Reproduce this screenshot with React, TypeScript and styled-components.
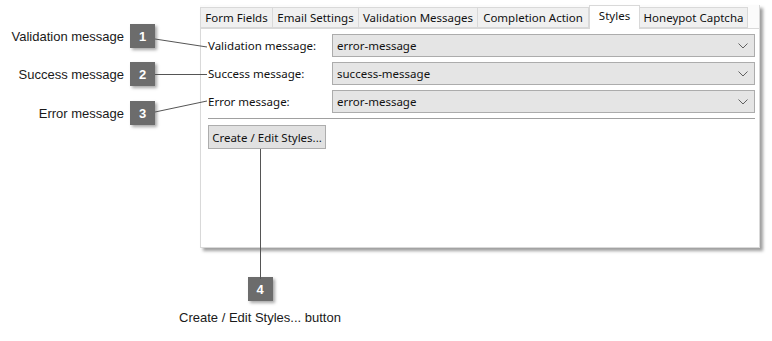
import React from "react";
import styled, { createGlobalStyle } from "styled-components";

const Global = createGlobalStyle`
  html, body { margin: 0; padding: 0; background: #ffffff; }
  body { width: 772px; height: 341px; overflow: hidden; }
`;

const UI_FONT = `"Noto Sans", "Open Sans", sans-serif`;
const NOTE_FONT = `"Liberation Sans", Arial, sans-serif`;

const Page = styled.div`
  position: relative;
  width: 772px;
  height: 341px;
  display: flex;
  flex-direction: column;
`;

const Top = styled.div`
  display: flex;
  flex-direction: row;
  align-items: flex-start;
`;

const Callouts = styled.div`
  width: 200px;
  padding-top: 24px;
  display: flex;
  flex-direction: column;
  gap: 14px;
`;

const CalloutRow = styled.div<{ $gap?: number }>`
  display: flex;
  align-items: center;
  justify-content: flex-end;
  gap: 6px;
  padding-right: 45px;
  margin-top: ${(p) => p.$gap ?? 0}px;
`;

const NoteText = styled.span`
  font-family: ${NOTE_FONT};
  font-size: 13px;
  color: #1a1a1a;
  white-space: nowrap;
`;

const Badge = styled.div`
  width: 25px;
  height: 24px;
  background: #6c6c6c;
  color: #ffffff;
  font-family: ${NOTE_FONT};
  font-weight: bold;
  font-size: 13px;
  display: flex;
  align-items: center;
  justify-content: center;
  box-shadow: 2px 2px 3px rgba(0, 0, 0, 0.35);
  flex-shrink: 0;
`;

const Window = styled.div`
  width: 560px;
  margin-top: 5px;
  display: flex;
  flex-direction: column;
  box-shadow: 3px 3px 3px rgba(0, 0, 0, 0.38);
  font-family: ${UI_FONT};
  font-size: 11.5px;
  color: #111;
`;

const TabStrip = styled.div`
  height: 23px;
  display: flex;
  align-items: flex-end;
  border-right: 1px solid #d9d9d9;
  background: #fbfbfb;
  position: relative;
  z-index: 1;
`;

const Tab = styled.div<{ $w: number; $active?: boolean }>`
  width: ${(p) => p.$w}px;
  box-sizing: border-box;
  height: ${(p) => (p.$active ? 24 : 21)}px;
  margin-bottom: ${(p) => (p.$active ? -1 : 0)}px;
  background: ${(p) => (p.$active ? "#ffffff" : "#f0f0f0")};
  border: 1px solid #d9d9d9;
  border-left-width: ${(p) => (p.$active ? 1 : 0)}px;
  border-bottom: ${(p) => (p.$active ? "none" : "1px solid #d9d9d9")};
  display: flex;
  align-items: ${(p) => (p.$active ? "flex-start" : "center")};
  justify-content: center;
  padding-top: ${(p) => (p.$active ? 2 : 0)}px;
  white-space: nowrap;
  &:first-child { border-left-width: 1px; }
`;

const TabFiller = styled.div`
  flex: 1;
  align-self: stretch;
`;

const Content = styled.div`
  height: 220px;
  box-sizing: border-box;
  background: #ffffff;
  border: 1px solid #d9d9d9;
  padding: 5px 4px 0 7px;
  display: flex;
  flex-direction: column;
  gap: 5px;
`;

const FieldRow = styled.div`
  display: flex;
  align-items: center;
  height: 23px;
`;

const FieldLabel = styled.div`
  width: 124px;
  white-space: nowrap;
`;

const Select = styled.div`
  flex: 1;
  height: 23px;
  box-sizing: border-box;
  background: #e5e5e5;
  border: 1px solid #acacac;
  display: flex;
  align-items: center;
  justify-content: space-between;
  padding: 0 6px 0 4px;
`;

const Separator = styled.div`
  height: 1px;
  background: #a0a0a0;
`;

const Button = styled.div`
  width: 118px;
  height: 24px;
  box-sizing: border-box;
  margin-top: 1px;
  background: #e1e1e1;
  border: 1px solid #adadad;
  display: flex;
  align-items: center;
  justify-content: center;
  white-space: nowrap;
`;

const Bottom = styled.div`
  margin-top: 29px;
  width: 520px;
  display: flex;
  flex-direction: column;
  align-items: center;
  gap: 9px;
`;

const Connectors = styled.svg`
  position: absolute;
  left: 0;
  top: 0;
  pointer-events: none;
  z-index: 2;
`;

const Chevron = () => (
  <svg width="10" height="6" viewBox="0 0 10 6">
    <path d="M0.5 0.5 L5 5 L9.5 0.5" fill="none" stroke="#606060" strokeWidth="1" />
  </svg>
);

const tabs = [
  { label: "Form Fields", w: 73 },
  { label: "Email Settings", w: 86 },
  { label: "Validation Messages", w: 119 },
  { label: "Completion Action", w: 111 },
  { label: "Styles", w: 51, active: true },
  { label: "Honeypot Captcha", w: 108 },
];

const fields = [
  { label: "Validation message:", value: "error-message" },
  { label: "Success message:", value: "success-message" },
  { label: "Error message:", value: "error-message" },
];

const notes = ["Validation message", "Success message", "Error message"];

export default function App() {
  return (
    <Page>
      <Global />
      <Top>
        <Callouts>
          {notes.map((n, i) => (
            <CalloutRow key={n} $gap={i === 2 ? 1 : 0}>
              <NoteText>{n}</NoteText>
              <Badge>{i + 1}</Badge>
            </CalloutRow>
          ))}
        </Callouts>
        <Window>
          <TabStrip>
            {tabs.map((t) => (
              <Tab key={t.label} $w={t.w} $active={t.active}>
                {t.label}
              </Tab>
            ))}
            <TabFiller />
          </TabStrip>
          <Content>
            {fields.map((f) => (
              <FieldRow key={f.label}>
                <FieldLabel>{f.label}</FieldLabel>
                <Select>
                  <span>{f.value}</span>
                  <Chevron />
                </Select>
              </FieldRow>
            ))}
            <Separator />
            <Button>Create / Edit Styles...</Button>
          </Content>
        </Window>
      </Top>
      <Bottom>
        <Badge>4</Badge>
        <NoteText>Create / Edit Styles... button</NoteText>
      </Bottom>
      <Connectors width="772" height="341" viewBox="0 0 772 341">
        <g stroke="#555555" strokeWidth="1" fill="none">
          <line x1="155" y1="39" x2="207" y2="47" />
          <line x1="155" y1="74.5" x2="207" y2="74.5" />
          <line x1="155" y1="112" x2="207" y2="101" />
          <line x1="260.5" y1="149" x2="260.5" y2="279" />
        </g>
      </Connectors>
    </Page>
  );
}
